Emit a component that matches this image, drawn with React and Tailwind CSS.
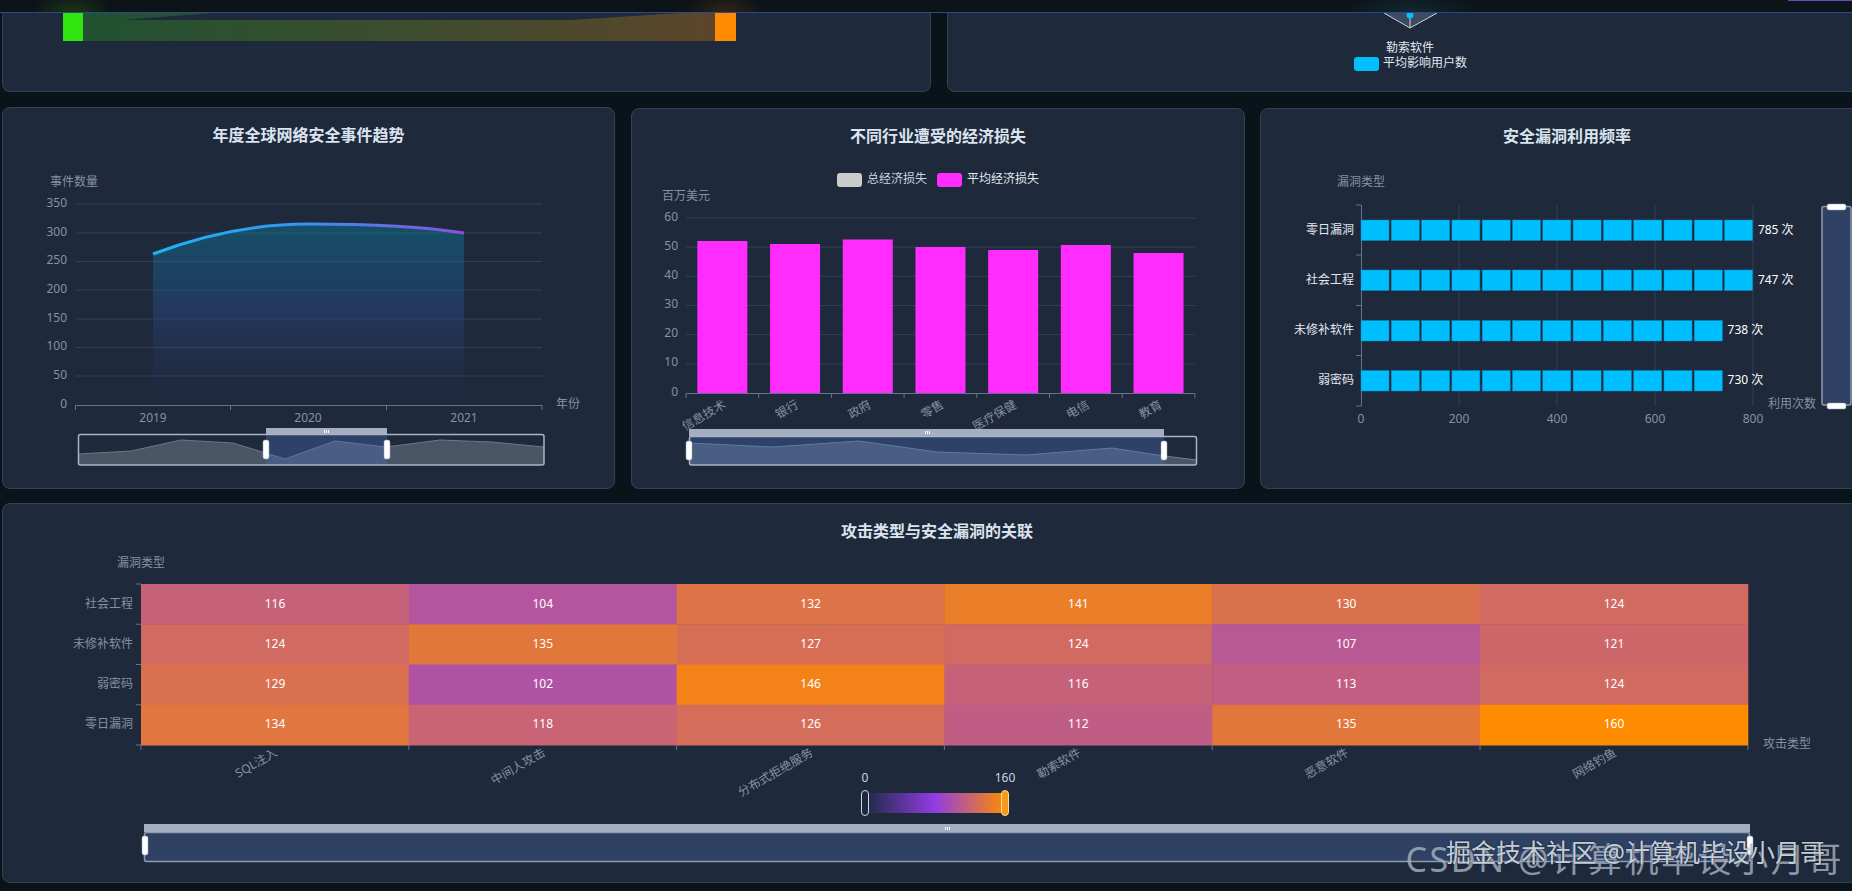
const axisText = "#8492a6";
const gridLine = "#334155";

const lineYears = [
    { label: "2019", x: 153 },
    { label: "2020", x: 308 },
    { label: "2021", x: 464 },
];
const lineTicks = [
    { label: "350", y: 204 },
    { label: "300", y: 233 },
    { label: "250", y: 261.5 },
    { label: "200", y: 290 },
    { label: "150", y: 319 },
    { label: "100", y: 347.5 },
    { label: "50", y: 376 },
    { label: "0", y: 405 },
];

const industries = [
    { name: "信息技术", top: 241 },
    { name: "银行", top: 244 },
    { name: "政府", top: 239.5 },
    { name: "零售", top: 247 },
    { name: "医疗保健", top: 250 },
    { name: "电信", top: 245 },
    { name: "教育", top: 253 },
];

const vulnerabilities = [
    { name: "零日漏洞", value: 785, blocks: 13, y: 220 },
    { name: "社会工程", value: 747, blocks: 13, y: 270 },
    { name: "未修补软件", value: 738, blocks: 12, y: 320.5 },
    { name: "弱密码", value: 730, blocks: 12, y: 370.5 },
];

const attackTypes = ["SQL注入", "中间人攻击", "分布式拒绝服务", "勒索软件", "恶意软件", "网络钓鱼"];
const heatRows = [
    { name: "社会工程", values: [116, 104, 132, 141, 130, 124] },
    { name: "未修补软件", values: [124, 135, 127, 124, 107, 121] },
    { name: "弱密码", values: [129, 102, 146, 116, 113, 124] },
    { name: "零日漏洞", values: [134, 118, 126, 112, 135, 160] },
];

// purple -> orange, same scale the legend shows
const heatColor = (value) => {
    const v = Math.max(0, (value - 80) / 80);
    const t = Math.min(1, v + 0.1 * v * v);
    const r = Math.round(146 + (255 - 146) * t);
    const g = Math.round(60 + (140 - 60) * t);
    const b = Math.round(228 * (1 - t));
    return `rgb(${r},${g},${b})`;
};

const Card = ({ title, className = "", children }) => (
    <div className={`rounded-lg border border-[#334155] bg-[#1e293b] ${className}`}>
        {title && <h3 className="pt-[15px] pb-px text-center text-base leading-6 font-bold text-[#dbe4ee]">{title}</h3>}
        {children}
    </div>
);

// viewBox uses page coordinates so chart numbers can be read straight off the design
const Plot = ({ x, y, w, h, children }) => (
    <svg className="block" width={w} height={h} viewBox={`${x} ${y} ${w} ${h}`}>
        {children}
    </svg>
);

const Label = ({ x, y, anchor = "start", color = axisText, rotate, children }) => (
    <text
        x={x}
        y={y - 1}
        textAnchor={anchor}
        dominantBaseline="central"
        fontSize="12"
        fill={color}
        transform={rotate ? `rotate(${rotate} ${x} ${y - 1})` : undefined}
    >
        {children}
    </text>
);

const Handle = ({ x, y, w = 6, h = 19 }) => (
    <rect x={x} y={y} width={w} height={h} rx="2" fill="#ffffff" stroke="#94a3b8" strokeWidth="0.5" />
);

const Grip = ({ x, y }) => (
    <g fill="#ffffff">
        <rect x={x - 2} y={y} width="1" height="3" />
        <rect x={x} y={y} width="1" height="3" />
        <rect x={x + 2} y={y} width="1" height="3" />
    </g>
);

const TrendChart = () => (
    <Plot x={3} y={148} w={611} h={340}>
        <defs>
            <linearGradient id="trendStroke" x1="0" y1="0" x2="1" y2="0">
                <stop offset="0" stopColor="#18b6f6" />
                <stop offset="0.5" stopColor="#3f8fee" />
                <stop offset="1" stopColor="#8a4fdc" />
            </linearGradient>
            <linearGradient id="trendFill" x1="0" y1="0" x2="0" y2="1">
                <stop offset="0" stopColor="#0a7f9f" stopOpacity="0.45" />
                <stop offset="0.5" stopColor="#2a4a88" stopOpacity="0.42" />
                <stop offset="1" stopColor="#2a3060" stopOpacity="0.03" />
            </linearGradient>
        </defs>
        <Label x={50} y={182}>事件数量</Label>
        {lineTicks.map((tick) => (
            <g key={tick.label}>
                {tick.y !== 405 && <line x1="75.5" x2="542" y1={tick.y} y2={tick.y} stroke={gridLine} />}
                <Label x={67} y={tick.y - 1} anchor="end">{tick.label}</Label>
            </g>
        ))}
        <path d="M153,254 C200,236 250,224 308,224 C360,224 420,226 464,233 L464,405 L153,405 Z" fill="url(#trendFill)" />
        <path d="M153,254 C200,236 250,224 308,224 C360,224 420,226 464,233" fill="none" stroke="url(#trendStroke)" strokeWidth="3" />
        <line x1="75.5" x2="542" y1="405.5" y2="405.5" stroke="#64748b" />
        {[75.5, 230.5, 386.5, 542].map((x) => (
            <line key={x} x1={x} x2={x} y1="405" y2="410" stroke="#64748b" />
        ))}
        {lineYears.map((year) => (
            <Label key={year.label} x={year.x} y={418} anchor="middle">{year.label}</Label>
        ))}
        <Label x={556} y={404}>年份</Label>

        <path d="M78,454 L131,451 L181,440 L233,443 L285,459 L335,441 L386,447 L440,440 L492,442 L544,447 L544,465 L78,465 Z" fill="#4a5565" stroke="none" />
        <path d="M78,454 L131,451 L181,440 L233,443 L285,459 L335,441 L386,447 L440,440 L492,442 L544,447" fill="none" stroke="#6b7688" />
        <rect x="266" y="434" width="121" height="31" fill="#4a70c0" fillOpacity="0.35" />
        <rect x="78.5" y="434.5" width="465.5" height="30.5" rx="2" fill="none" stroke="#aab4c5" strokeWidth="1.5" />
        <rect x="266" y="428" width="121" height="6" fill="#a6afc1" />
        <Grip x={326} y={430} />
        <Handle x={263} y={440} />
        <Handle x={384} y={440} />
    </Plot>
);

const LossChart = () => (
    <Plot x={632} y={149} w={612} h={339}>
        <rect x="837" y="173" width="25" height="14" rx="3" fill="#cccccc" />
        <Label x={867} y={179} color="#cbd5e1">总经济损失</Label>
        <rect x="937" y="173" width="25" height="14" rx="3" fill="#ff2bff" />
        <Label x={967} y={179} color="#e2e8f0">平均经济损失</Label>
        <Label x={662} y={196}>百万美元</Label>
        {[60, 50, 40, 30, 20, 10, 0].map((value, i) => {
            const y = 218 + i * 29.17;
            return (
                <g key={value}>
                    {value !== 0 && <line x1="686" x2="1195" y1={y} y2={y} stroke={gridLine} />}
                    <Label x={678} y={y - 1} anchor="end">{value}</Label>
                </g>
            );
        })}
        {industries.map((item, i) => {
            const center = 686 + 72.7 * (i + 0.5);
            return (
                <g key={item.name}>
                    <rect x={center - 25} y={item.top} width="50" height={393 - item.top} fill="#ff2bff" />
                    <Label x={center + 2} y={404} anchor="end" rotate={-30}>{item.name}</Label>
                </g>
            );
        })}
        <line x1="686" x2="1195" y1="393.5" y2="393.5" stroke="#64748b" />
        {[0, 1, 2, 3, 4, 5, 6, 7].map((i) => (
            <line key={i} x1={686 + i * 72.7} x2={686 + i * 72.7} y1="393" y2="398" stroke="#64748b" />
        ))}

        <path d="M689,443 L773,447 L859,441 L937,452 L1026,455 L1112,448 L1164,456 L1197,460 L1197,465 L689,465 Z" fill="#4a5565" />
        <path d="M689,443 L773,447 L859,441 L937,452 L1026,455 L1112,448 L1164,456 L1197,460" fill="none" stroke="#6b7f9f" />
        <rect x="689" y="436" width="475" height="29" fill="#4a70c0" fillOpacity="0.35" />
        <rect x="689.5" y="436.5" width="507" height="28.5" rx="2" fill="none" stroke="#aab4c5" strokeWidth="1.5" />
        <rect x="689" y="429" width="475" height="7" fill="#a6afc1" />
        <Grip x={927} y={431} />
        <Handle x={686} y={441} />
        <Handle x={1161} y={441} />
    </Plot>
);

const FrequencyChart = () => (
    <Plot x={1261} y={149} w={612} h={339}>
        <Label x={1337} y={182}>漏洞类型</Label>
        {[0, 200, 400, 600, 800].map((value, i) => {
            const x = 1361 + i * 98;
            return (
                <g key={value}>
                    {i > 0 && <line x1={x} x2={x} y1="205" y2="406" stroke={gridLine} />}
                    <Label x={x} y={419} anchor="middle">{value}</Label>
                </g>
            );
        })}
        <line x1="1361.5" x2="1361.5" y1="205" y2="406" stroke="#64748b" />
        {[205, 255, 305.5, 355.5, 406].map((y) => (
            <line key={y} x1="1356" x2="1361" y1={y} y2={y} stroke="#64748b" />
        ))}
        {vulnerabilities.map((item) => (
            <g key={item.name}>
                <Label x={1354} y={item.y + 10} anchor="end" color="#e2e8f0">{item.name}</Label>
                {Array.from({ length: item.blocks }, (_, i) => (
                    <rect key={i} x={1361 + i * 30.3} y={item.y} width="28" height="20.5" fill="#00bfff" stroke="#0b8ac2" strokeWidth="0.5" />
                ))}
                <Label x={1364 + item.blocks * 30.3} y={item.y + 10} color="#ffffff">{item.value} 次</Label>
            </g>
        ))}
        <Label x={1768} y={404}>利用次数</Label>
        <rect x="1822" y="206.5" width="29" height="198.5" rx="2" fill="#2f4263" stroke="#8f9bb3" strokeWidth="1.5" />
        <Handle x={1827} y={204} w={19} h={6} />
        <Handle x={1827} y={403} w={19} h={6} />
    </Plot>
);

const HeatmapChart = () => (
    <Plot x={3} y={544} w={1870} h={338}>
        <defs>
            <linearGradient id="legendFill" x1="0" y1="0" x2="1" y2="0">
                <stop offset="0" stopColor="#1e2a44" />
                <stop offset="0.5" stopColor="#923ce4" />
                <stop offset="1" stopColor="#ff8c00" />
            </linearGradient>
        </defs>
        <Label x={117} y={563}>漏洞类型</Label>
        {heatRows.map((row, r) => (
            <g key={row.name}>
                <Label x={133} y={604 + r * 40.25} anchor="end">{row.name}</Label>
                {row.values.map((value, c) => (
                    <g key={c}>
                        <rect x={141 + c * 267.8} y={584 + r * 40.25} width="268.3" height="40.75" fill={heatColor(value)} />
                        <Label x={275 + c * 267.8} y={604 + r * 40.25} anchor="middle" color="#ffffff">{value}</Label>
                    </g>
                ))}
            </g>
        ))}
        {[0, 1, 2, 3, 4].map((r) => (
            <line key={r} x1="136" x2="141" y1={584 + r * 40.25} y2={584 + r * 40.25} stroke="#64748b" />
        ))}
        {[0, 1, 2, 3, 4, 5, 6].map((c) => (
            <line key={c} x1={141 + c * 267.8} x2={141 + c * 267.8} y1="745" y2="750" stroke="#64748b" />
        ))}
        {attackTypes.map((name, c) => (
            <Label key={name} x={276 + c * 267.8} y={752} anchor="end" rotate={-30}>{name}</Label>
        ))}
        <Label x={1763} y={744}>攻击类型</Label>

        <Label x={865} y={778} anchor="middle" color="#cbd5e1">0</Label>
        <Label x={1005} y={778} anchor="middle" color="#cbd5e1">160</Label>
        <rect x="865" y="793" width="140" height="20" fill="url(#legendFill)" />
        <rect x="861.5" y="790.5" width="7" height="25" rx="3.5" fill="#1e293b" stroke="#cbd5e1" />
        <rect x="1001.5" y="790.5" width="7" height="25" rx="3.5" fill="#f59a1b" stroke="#fcd9a0" />

        <rect x="144.5" y="832.5" width="1605" height="29" rx="2" fill="#2f4263" stroke="#8f9bb3" strokeWidth="1.5" />
        <rect x="144" y="824" width="1606" height="8" fill="#a3aec4" />
        <Grip x={947} y={827} />
        <Handle x={142} y={836} />
        <Handle x={1747} y={836} />
    </Plot>
);

const App = () => {
    return (
        <div className="relative h-[891px] w-full overflow-hidden bg-[#0b131a] [font-family:'Noto_Sans','Noto_Sans_CJK_SC',sans-serif]">
            <div className="flex h-[13px] w-[1872px] justify-end border-b border-[#2b4a8a] bg-[#0c1319] bg-[radial-gradient(40px_20px_at_72px_100%,rgba(60,120,20,.35),transparent),radial-gradient(40px_20px_at_725px_100%,rgba(120,70,20,.35),transparent),radial-gradient(70px_20px_at_1410px_100%,rgba(30,90,110,.3),transparent)] pr-5">
                <div className="h-px w-16 bg-[#5b4fc0]" />
            </div>

            <div className="grid h-[79px] w-[1872px] grid-cols-[929px_925px] gap-4 pl-0.5">
                <Card className="rounded-t-none border-t-0">
                    <Plot x={3} y={13} w={927} h={78}>
                        <defs>
                            <linearGradient id="sankeyBand" x1="0" y1="0" x2="1" y2="0">
                                <stop offset="0" stopColor="#2fe40f" stopOpacity="0.22" />
                                <stop offset="1" stopColor="#ff8c00" stopOpacity="0.28" />
                            </linearGradient>
                        </defs>
                        <path d="M83,13 L212,13 L122,20 L570,20 L680,13 L715,13 L715,41 L83,41 Z" fill="url(#sankeyBand)" />
                        <rect x="63" y="13" width="20" height="28" fill="#2fe40f" />
                        <rect x="715" y="13" width="21" height="28" fill="#ff8c00" />
                    </Plot>
                </Card>
                <Card className="rounded-t-none border-t-0">
                    <Plot x={948} y={13} w={923} h={78}>
                        <path d="M1384,13 L1410,28 L1437,13 Z" fill="#64748b" fillOpacity="0.45" />
                        <path d="M1384,13 L1410,28 L1437,13 M1410,13 L1410,28" fill="none" stroke="#cbd5e1" />
                        <circle cx="1410" cy="15" r="3.5" fill="#00bfff" />
                        <Label x={1410} y={48} anchor="middle" color="#e2e8f0">勒索软件</Label>
                        <rect x="1354" y="57" width="25" height="14" rx="3" fill="#00bfff" />
                        <Label x={1383} y={63} color="#e2e8f0">平均影响用户数</Label>
                    </Plot>
                </Card>
            </div>

            <div className="mt-4 grid h-[381px] w-[1872px] grid-cols-[613px_614px_613px] gap-4 pl-0.5">
                <Card title="年度全球网络安全事件趋势" className="-mt-px">
                    <TrendChart />
                </Card>
                <Card title="不同行业遭受的经济损失">
                    <LossChart />
                </Card>
                <Card title="安全漏洞利用频率" className="-ml-px">
                    <FrequencyChart />
                </Card>
            </div>

            <div className="mt-3.5 h-[380px] w-[1872px] pl-0.5">
                <Card title="攻击类型与安全漏洞的关联" className="h-full">
                    <HeatmapChart />
                </Card>
            </div>

            {/* video watermarks stacked on top of the page */}
            <span className="absolute top-[837px] right-[8px] text-[34px] leading-[44px] tracking-[2.6px] whitespace-nowrap text-[#aab6c4]/80">CSDN @计算机毕设小月哥</span>
            <span className="absolute top-[835px] right-[27px] text-[25px] leading-[34px] whitespace-nowrap text-[#dfe4ea]/90 [text-shadow:0_0_2px_#0f172a]">掘金技术社区 @计算机毕设小月哥</span>
        </div>
    );
};

export default App;
